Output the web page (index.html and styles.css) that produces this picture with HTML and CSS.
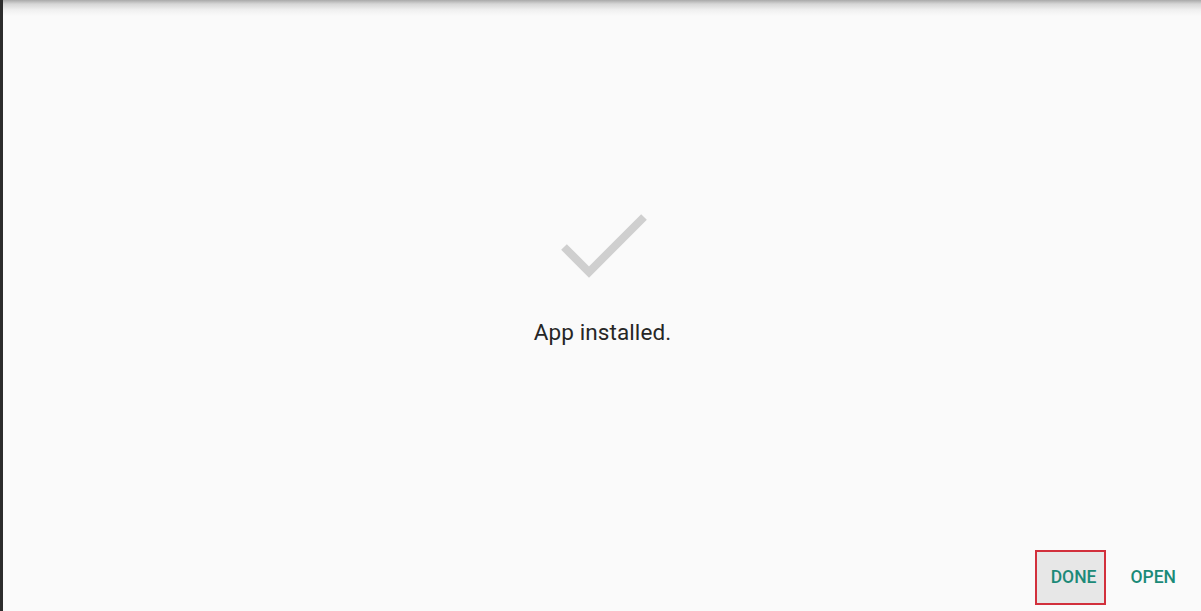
FILE: index.html
```html
<!DOCTYPE html>
<html lang="en">
<head>
<meta charset="utf-8">
<title>App installed</title>
<link rel="stylesheet" href="styles.css">
</head>
<body>
<div class="screen">
  <main class="content">
    <svg class="check" width="100" height="70" viewBox="0 0 100 70" aria-hidden="true">
      <polyline points="8,37 33,62 88,7" fill="none" stroke="#cfcfcf" stroke-width="8" stroke-linecap="butt" stroke-linejoin="miter"/>
    </svg>
    <p class="message">App installed.</p>
  </main>
  <footer class="actions">
    <button class="btn btn-focused">DONE</button>
    <button class="btn btn-plain">OPEN</button>
  </footer>
</div>
</body>
</html>
```

FILE: styles.css
```css
html, body {
  margin: 0;
  padding: 0;
  height: 100%;
}
body {
  font-family: Roboto, "Noto Sans", "Liberation Sans", sans-serif;
  background: #fafafa;
}
.screen {
  height: 611px;
  box-sizing: border-box;
  border-left: 3px solid #2c2c2c;
  background: linear-gradient(to bottom, #a9a9a9 0px, #d6d6d6 4px, #f0f0f0 10px, #fafafa 16px, #fafafa 100%);
  display: flex;
  flex-direction: column;
}
.content {
  flex: 1;
  display: flex;
  flex-direction: column;
  align-items: center;
  padding-top: 210px;
  padding-right: 3px;
}
.check {
  display: block;
  margin-left: 10px;
}
.message {
  margin: 39px 0 0 4px;
  font-size: 22.5px;
  color: #262626;
  letter-spacing: 0.1px;
}
.actions {
  display: flex;
  justify-content: flex-end;
  align-items: center;
  gap: 10px;
  padding: 0 13px 6px 0;
}
.btn {
  font-family: Roboto, "Noto Sans", "Liberation Sans", sans-serif;
  font-size: 17.5px;
  font-weight: 500;
  color: #1b8a78;
  background: transparent;
  border: 2px solid transparent;
  height: 55px;
  padding: 0 10px 2px 12px;
  cursor: pointer;
}
.btn-focused {
  border-color: #d2303c;
  background: #e7e7e7;
  padding: 0 8px 2px 14px;
}
```
